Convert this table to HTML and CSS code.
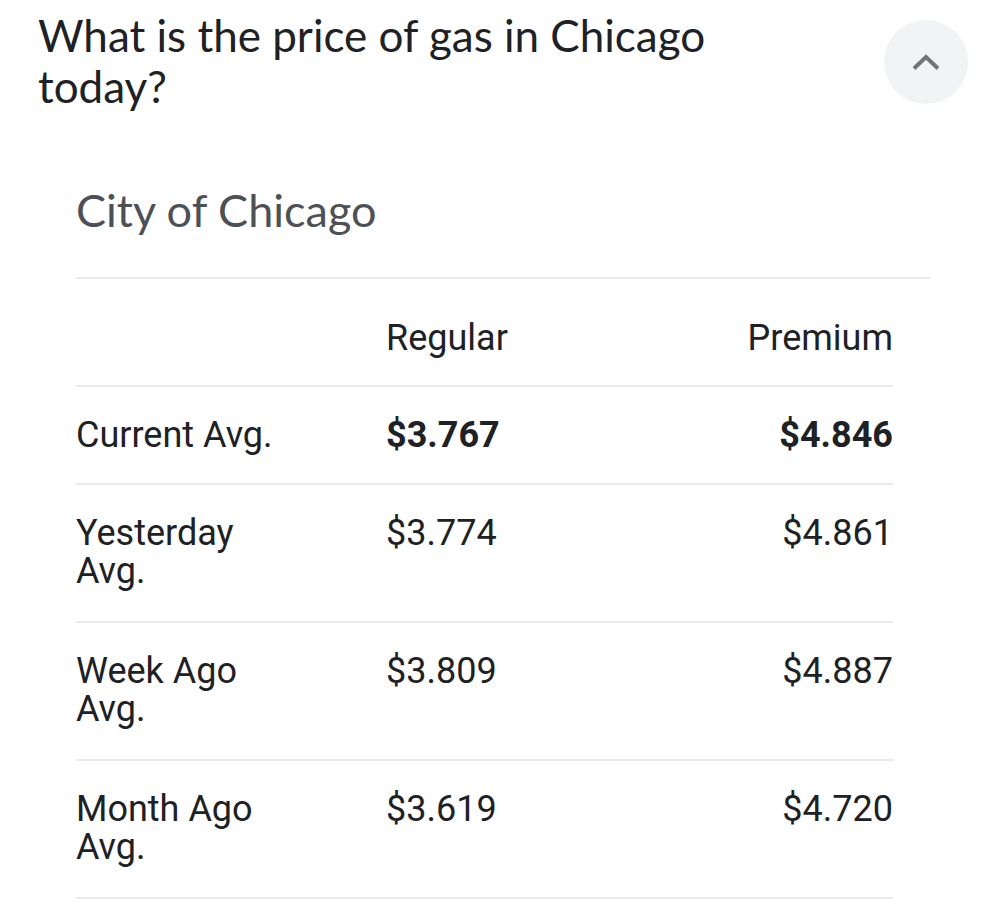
FILE: index.html
```html
<!DOCTYPE html>
<html>
  <head>
    <meta name="viewport" content="width=device-width, initial-scale=1.0">
    <link rel="stylesheet" href="styles.css">
  </head>
  <body>
    <div class="question">
      <div class="question-text">What is the price of gas in Chicago today?</div>
      <div class="toggle">
        <svg width="30" height="20" viewBox="0 0 30 20">
          <path d="M3 16.5 L15 5 L27 16.5" fill="none" stroke="#70757a" stroke-width="4"/>
        </svg>
      </div>
    </div>

    <div class="answer">
      <div class="city">City of Chicago</div>
      <div class="divider"></div>
      <table class="prices">
        <colgroup>
          <col class="col-label">
          <col class="col-regular">
          <col>
        </colgroup>
        <tr class="head">
          <td></td>
          <td>Regular</td>
          <td class="right">Premium</td>
        </tr>
        <tr class="current">
          <td>Current Avg.</td>
          <td>$3.767</td>
          <td class="right">$4.846</td>
        </tr>
        <tr>
          <td>Yesterday Avg.</td>
          <td>$3.774</td>
          <td class="right">$4.861</td>
        </tr>
        <tr>
          <td>Week Ago Avg.</td>
          <td>$3.809</td>
          <td class="right">$4.887</td>
        </tr>
        <tr>
          <td>Month Ago Avg.</td>
          <td>$3.619</td>
          <td class="right">$4.720</td>
        </tr>
      </table>
    </div>
  </body>
</html>
```
FILE: styles.css
```css
/* Page */
body {
  margin: 0;
  background: #fff;
  color: #202124;
  font-family: Roboto, Arial, sans-serif;
}

/* Question header */
.question {
  display: flex;
  justify-content: space-between;
  align-items: flex-start;
  padding: 10px 32px 0 38px;
}

.question-text {
  width: 720px;
  font-family: Lato, Roboto, sans-serif;
  font-size: 44px;
  line-height: 51px;
}

.toggle {
  width: 84px;
  height: 84px;
  margin-top: 10px;
  border-radius: 50%;
  background-color: #f1f3f4;
  display: flex;
  justify-content: center;
  align-items: center;
}

/* Answer card */
.answer {
  padding: 73px 70px 0 76px;
}

.city {
  font-family: Lato, Roboto, sans-serif;
  font-size: 45px;
  line-height: 50px;
  color: #4d5156;
}

.divider {
  height: 2px;
  background-color: #e8eaed;
  margin-top: 42px;
}

.prices {
  width: 817px;
  table-layout: fixed;
  border-collapse: collapse;
  font-size: 36px;
  line-height: 38px;
}

.col-label {
  width: 310px;
}

.col-regular {
  width: 250px;
}

.prices td {
  padding: 29px 0 31px 0;
  border-bottom: 2px solid #e8eaed;
  vertical-align: top;
}

.prices td:first-child {
  padding-right: 95px;
}

.prices .head td {
  padding-top: 40px;
  padding-bottom: 28px;
}

.prices .current td {
  padding-bottom: 29px;
  font-weight: bold;
}

.prices .current td:first-child {
  font-weight: normal;
}

.right {
  text-align: right;
}
```
